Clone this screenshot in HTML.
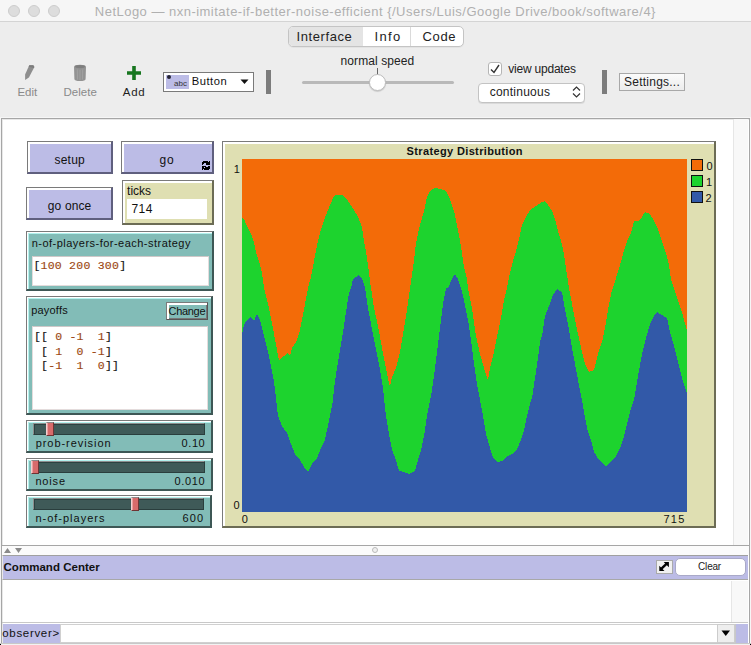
<!DOCTYPE html>
<html><head><meta charset="utf-8">
<style>
*{box-sizing:border-box;margin:0;padding:0}
html,body{width:751px;height:645px;overflow:hidden;background:#ededed;font-family:"Liberation Sans",sans-serif;position:relative}
.a{position:absolute}
.t{position:absolute;white-space:pre;line-height:1}
.btn{position:absolute;background:#bcbce6;border-top:1px solid #7a7a7a;border-left:1px solid #7a7a7a;border-right:2px solid #5f5f7e;border-bottom:2px solid #5f5f7e;box-shadow:inset 2px 2px 0 #fff}
.mon{position:absolute;background:#dfdfb2;border-top:1px solid #7a7a7a;border-left:1px solid #7a7a7a;border-right:2px solid #6c6c55;border-bottom:2px solid #6c6c55;box-shadow:inset 2px 2px 0 #fff}
.teal{position:absolute;background:#82bcb7;border-top:1px solid #7a7a7a;border-left:1px solid #7a7a7a;border-right:2px solid #3d5755;border-bottom:2px solid #3d5755;box-shadow:inset 1px 1px 0 #fff, inset 2px 2px 0 #b2f2ee}
.track{position:absolute;background:#3f5a58;border-top:1px solid #8e8e8e;border-left:1px solid #8e8e8e;border-right:1px solid #2a3e3d;border-bottom:1px solid #2a3e3d;box-shadow:inset 1px 1px 0 #2c4241}
.thumb{position:absolute;width:8px;height:14px;background:#d86b6b;border-top:1px solid #8a8a8a;border-left:1px solid #f4d0d0;border-right:1px solid #6e3434;border-bottom:1px solid #6e3434;box-shadow:inset 1px 0 0 #eaa0a0}
.inbox{position:absolute;background:#fff;border:1px solid #e4dcdc;border-top-color:#cfc8c8}
.num{color:#9c4712}
</style></head><body>
<!-- title bar -->
<div class="a" style="left:0;top:0;width:751px;height:22px;background:#f6f6f6;border-bottom:1px solid #d4d4d4"></div>
<div class="a" style="left:8px;top:5px;width:12px;height:12px;border-radius:50%;background:#dddddd;border:1px solid #cdcdcd"></div>
<div class="a" style="left:28px;top:5px;width:12px;height:12px;border-radius:50%;background:#dddddd;border:1px solid #cdcdcd"></div>
<div class="a" style="left:48px;top:5px;width:12px;height:12px;border-radius:50%;background:#dddddd;border:1px solid #cdcdcd"></div>

<!-- tabs -->
<div class="a" style="left:288px;top:26px;width:176px;height:21px;border:1px solid #c4c4c4;border-radius:5px;background:#fff;overflow:hidden;box-shadow:0 1px 0 rgba(0,0,0,0.04)">
  <div class="a" style="left:0;top:0;width:74px;height:19px;background:#e4e4e4"></div>
  <div class="a" style="left:121px;top:0;width:1px;height:19px;background:#dadada"></div>
</div>

<!-- toolbar icons -->
<svg class="a" style="left:20px;top:62px" width="20" height="22" viewBox="0 0 20 22">
  <path d="M9.3 3.2 L13.3 3.2 L14.4 4.9 L8.9 15.4 L5.1 18 L5.1 12.6 Z" fill="#8e8e8e"/><path d="M9.3 3.2 L13.3 3.2 L14.4 4.9 L13.8 6 L8.6 4.7 Z" fill="#7d7d7d"/>
</svg>
<svg class="a" style="left:70px;top:62px" width="20" height="22" viewBox="0 0 20 22">
  <path d="M4 5 Q4 2.8 10 2.8 Q16 2.8 16 5 L15.6 17 Q15.4 19 10 19 Q4.6 19 4.4 17 Z" fill="#939393"/>
  <ellipse cx="10" cy="4.6" rx="5" ry="1.6" fill="#7e7e7e"/>
  <path d="M7.3 7.5 L7.5 17.5 M10 7.8 L10 18 M12.7 7.5 L12.5 17.5" stroke="#a4a4a4" stroke-width="0.9"/>
</svg>
<svg class="a" style="left:125px;top:64px" width="18" height="18" viewBox="0 0 18 18">
  <path d="M7.2 2 H10.8 V7.2 H16 V10.8 H10.8 V16 H7.2 V10.8 H2 V7.2 H7.2 Z" fill="#17761f"/>
</svg>

<!-- widget dropdown -->
<div class="a" style="left:163px;top:72px;width:91px;height:20px;background:#fff;border:1px solid #7a7a7a"></div>
<div class="a" style="left:166px;top:75px;width:23px;height:14px;background:#bcbce6"></div>
<div class="t" style="left:174px;top:80px;font-size:8px;color:#333">abc</div>
<div class="a" style="left:167px;top:75px;width:4px;height:4px;border-radius:50%;background:#223"></div>
<svg class="a" style="left:240px;top:79px" width="10" height="6"><path d="M0.5 0.5 H8.5 L4.5 5 Z" fill="#111"/></svg>
<div class="a" style="left:266px;top:70px;width:5px;height:24px;background:#7c7c7c"></div>

<!-- speed slider -->
<div class="a" style="left:377px;top:68px;width:1px;height:7px;background:#666"></div>
<div class="a" style="left:302px;top:81px;width:152px;height:3px;border-radius:2px;background:#b9b9b9"></div>
<div class="a" style="left:369px;top:74px;width:17px;height:17px;border-radius:50%;background:#fff;border:1px solid #bdbdbd;box-shadow:0 1px 1px rgba(0,0,0,0.15)"></div>

<!-- view updates -->
<div class="a" style="left:488px;top:62px;width:14px;height:14px;border-radius:3px;background:#fff;border:1px solid #b5b5b5"></div>
<svg class="a" style="left:488px;top:62px" width="14" height="14"><path d="M3 7.5 L6 10.5 L11 3" stroke="#333" stroke-width="1.4" fill="none"/></svg>
<div class="a" style="left:478px;top:83px;width:107px;height:20px;border-radius:4px;background:#fff;border:1px solid #c3c3c3;box-shadow:0 1px 0 rgba(0,0,0,0.08)"></div>
<svg class="a" style="left:572px;top:86px" width="9" height="12"><path d="M1 4.5 L4.5 1 L8 4.5 M1 7.5 L4.5 11 L8 7.5" stroke="#333" stroke-width="1.2" fill="none"/></svg>
<div class="a" style="left:602px;top:70px;width:5px;height:24px;background:#7c7c7c"></div>
<div class="a" style="left:619px;top:73px;width:66px;height:18px;background:linear-gradient(#fbfbfb,#ececec);border:1px solid #a8a8a8"></div>

<!-- interface panel -->
<div class="a" style="left:0;top:117px;width:751px;height:528px;background:#f6f6f6"></div>
<div class="a" style="left:1px;top:118px;width:749px;height:428px;background:#fff;border:1px solid #a6a6a6;box-shadow:inset 1px 1px 0 #e8e8e8"></div>
<div class="a" style="left:733px;top:119px;width:15px;height:426px;background:#f8f8f8;border-left:1px solid #e6e6e6"></div>

<!-- buttons -->
<div class="btn" style="left:27px;top:141px;width:86px;height:33px"></div>
<div class="btn" style="left:121px;top:141px;width:93px;height:33px"></div>
<svg class="a" style="left:202px;top:161px" width="8" height="9" viewBox="0 0 8 9" shape-rendering="crispEdges" fill="#000"><rect x="1" y="0" width="5" height="1"/><rect x="7" y="0" width="1" height="1"/><rect x="0" y="1" width="8" height="1"/><rect x="0" y="2" width="2" height="1"/><rect x="4" y="2" width="4" height="1"/><rect x="0" y="3" width="1" height="1"/><rect x="4" y="3" width="4" height="1"/><rect x="0" y="5" width="4" height="1"/><rect x="6" y="5" width="2" height="1"/><rect x="0" y="6" width="2" height="1"/><rect x="3" y="6" width="5" height="1"/><rect x="0" y="7" width="8" height="1"/><rect x="0" y="8" width="1" height="1"/><rect x="2" y="8" width="5" height="1"/></svg>
<div class="btn" style="left:26px;top:187px;width:87px;height:33px"></div>

<!-- ticks monitor -->
<div class="mon" style="left:122px;top:180px;width:92px;height:45px"></div>
<div class="a" style="left:127px;top:199px;width:80px;height:20px;background:#fff"></div>

<!-- input n-of-players -->
<div class="teal" style="left:26px;top:231px;width:188px;height:60px"></div>
<div class="inbox" style="left:32px;top:256px;width:177px;height:30px"></div>

<!-- payoffs -->
<div class="teal" style="left:26px;top:296px;width:187px;height:119px"></div>
<div class="a" style="left:166px;top:302px;width:42px;height:18px;background:#82bcb7;border-top:1px solid #7a7a7a;border-left:1px solid #7a7a7a;border-right:1px solid #555;border-bottom:1px solid #555;box-shadow:inset 2px 2px 0 #fff, inset -1px -1px 0 #777"></div>
<div class="inbox" style="left:32px;top:326px;width:176px;height:84px"></div>

<!-- sliders -->
<div class="teal" style="left:26px;top:420px;width:187px;height:33px"></div>
<div class="track" style="left:33px;top:423px;width:172px;height:12px"></div>
<div class="thumb" style="left:46px;top:422px"></div>

<div class="teal" style="left:26px;top:458px;width:187px;height:33px"></div>
<div class="track" style="left:33px;top:461px;width:172px;height:12px"></div>
<div class="thumb" style="left:31px;top:460px"></div>

<div class="teal" style="left:26px;top:495px;width:186px;height:33px"></div>
<div class="track" style="left:33px;top:498px;width:171px;height:12px"></div>
<div class="thumb" style="left:131px;top:497px"></div>

<!-- plot -->
<div class="mon" style="left:222px;top:141px;width:494px;height:387px"></div>
<svg class="a" style="left:242px;top:159px" width="445" height="353" viewBox="0 0 445 353" shape-rendering="crispEdges">
  <rect x="0" y="0" width="445" height="353" fill="#f36b08"/>
  <polygon points="0,353 0,59 2,60 4,65 7,71 10,77 12,84 14,93 16,99 18,106 20,114 22,129 26,145 29,159 32,175 35,191 37,201 42,197 46,194 48,197 50,189 54,183 57,175 60,161 63,145 66,129 69,118 72,102 75,86 78,74 81,64 84,56 88,46 92,37 94,36 100,36 104,39 108,45 112,51 116,58 120,68 122,82 124,92 126,106 128,122 129,129 132,149 136,167 140,189 144,209 147,225 148,227 150,218 154,209 158,193 161,175 164,157 167,137 168,129 170,116 172,102 174,84 177,70 180,59 182,52 185,38 188,32 193,29 198,30 204,32 208,40 212,52 215,66 218,82 220,94 222,108 225,120 226,129 230,149 234,177 238,195 242,209 246,221 248,209 252,193 256,173 259,159 262,141 265,129 268,114 271,102 274,92 277,80 280,66 284,58 288,51 294,47 300,43 303,42 306,46 310,52 313,60 316,72 319,82 321,90 323,102 325,116 327,129 330,145 333,161 336,175 340,193 343,205 347,213 352,211 356,195 360,183 363,169 366,151 369,135 371,129 374,119 377,110 380,99 383,88 386,80 389,74 392,62 396,62 400,58 403,53 408,55 412,62 416,70 420,82 424,94 427,106 429,120 432,129 436,141 440,153 445,172 445,353" fill="#1dd32e"/>
  <polygon points="0,353 0,176 2,166 5,161 9,158 12,162 15,155 18,161 20,169 23,181 26,193 29,207 32,223 34,239 36,257 40,267 45,274 49,285 53,295 58,301 62,308 66,313 70,305 75,299 79,289 83,281 85,271 88,257 91,241 92,229 95,209 98,191 101,173 104,153 107,134 109,129 111,120 114,118 116,116 120,119 123,129 126,149 129,165 132,181 135,195 138,211 141,229 143,249 144,257 147,275 150,291 154,301 157,312 162,313 167,315 173,312 176,301 179,291 182,277 185,257 188,241 189,237 192,217 195,193 198,169 201,145 204,129 206,129 210,120 213,115 216,120 219,129 222,141 226,161 229,181 232,205 235,225 238,241 241,257 244,275 248,289 251,299 255,303 260,302 264,298 270,295 275,290 279,281 282,271 285,257 289,241 290,239 293,219 296,199 298,183 300,177 303,157 307,147 311,136 315,130 320,133 322,145 324,155 327,171 330,189 333,205 336,221 339,237 340,241 342,253 345,269 349,281 352,293 357,301 364,307 369,303 374,297 379,287 382,277 386,261 389,249 392,241 396,217 400,195 404,179 408,165 412,157 415,153 420,156 425,159 428,173 432,187 436,203 440,219 445,235 445,353" fill="#3259a8"/>
</svg>
<div class="a" style="left:691px;top:159px;width:12px;height:12px;background:#f36b08;border:1px solid #111"></div>
<div class="a" style="left:691px;top:175px;width:12px;height:12px;background:#1dd32e;border:1px solid #111"></div>
<div class="a" style="left:691px;top:191px;width:12px;height:12px;background:#3259a8;border:1px solid #111"></div>

<!-- splitter -->
<div class="a" style="left:749px;top:118px;width:1px;height:526px;background:#a6a6a6"></div>
<div class="a" style="left:1px;top:546px;width:1px;height:9px;background:#a6a6a6"></div>
<div class="a" style="left:2px;top:546px;width:747px;height:9px;background:#fbfbfb"></div>
<svg class="a" style="left:4px;top:548px" width="20" height="6"><path d="M0 5 L3.5 0 L7 5 Z M11 0 L18 0 L14.5 5 Z" fill="#8a8a8a"/></svg>
<div class="a" style="left:372px;top:547px;width:6px;height:6px;border-radius:50%;border:1px solid #bbb;background:#f0f0f0"></div>

<!-- command center -->
<div class="a" style="left:1px;top:555px;width:749px;height:90px;background:#fff;border-left:1px solid #a6a6a6;border-right:1px solid #a6a6a6;box-shadow:inset 1px 0 0 #e8e8e8"></div>
<div class="a" style="left:2px;top:555px;width:746px;height:25px;background:#bcbce6;border-top:1px solid #a0a0a0;border-bottom:1px solid #a8a8a8;border-left:1px solid #e8e8e8"></div>
<div class="a" style="left:656px;top:560px;width:17px;height:14px;background:#f0f0f0;border:1px solid #aaa"></div>
<svg class="a" style="left:658px;top:561px" width="13" height="12" viewBox="0 0 13 12"><path d="M10.9 1 L10.9 6.2 L5.7 1 Z M1.3 10 L1.3 4.8 L6.5 10 Z" fill="#000"/><path d="M3.2 7.9 L9 2.3" stroke="#000" stroke-width="2.4"/></svg>
<div class="a" style="left:675px;top:558px;width:71px;height:18px;border-radius:5px;background:#fff;border:1px solid #a9a9c8"></div>
<div class="a" style="left:731px;top:581px;width:17px;height:41px;background:#f8f8f8;border-left:1px solid #e6e6e6"></div>
<div class="a" style="left:2px;top:622px;width:746px;height:1px;background:#c8c8c8"></div>
<div class="a" style="left:3px;top:624px;width:57px;height:19px;background:#bcbce6"></div>
<div class="a" style="left:60px;top:624px;width:658px;height:19px;background:#fff;border:1px solid #d0d0d0"></div>
<div class="a" style="left:717px;top:624px;width:18px;height:19px;background:#eee;border:1px solid #ccc"></div>
<svg class="a" style="left:721px;top:630px" width="10" height="7"><path d="M0.5 0.5 H9 L4.75 6 Z" fill="#000"/></svg>
<div class="a" style="left:735px;top:624px;width:13px;height:19px;background:#bcbce6;border-left:1px solid #c8c8c8"></div>
<div class="a" style="left:0;top:643px;width:751px;height:1px;background:#c8c8c8"></div>
<div class="a" style="left:0;top:644px;width:751px;height:1px;background:#f2f2f2"></div>
<div class="a" style="left:0;top:644px;width:1px;height:1px;background:#000"></div>
<div class="a" style="left:750px;top:644px;width:1px;height:1px;background:#000"></div>
<div class="t" style="left:94.80px;top:5.10px;font-size:13px;letter-spacing:0.481px;font-family:'Liberation Sans',sans-serif;color:#b0b0b0;">NetLogo — nxn-imitate-if-better-noise-efficient {/Users/Luis/Google Drive/book/software/4}</div>
<div class="t" style="left:296.60px;top:29.50px;font-size:13px;letter-spacing:0.582px;font-family:'Liberation Sans',sans-serif;color:#222;">Interface</div>
<div class="t" style="left:374.60px;top:29.50px;font-size:13px;letter-spacing:1.333px;font-family:'Liberation Sans',sans-serif;color:#222;">Info</div>
<div class="t" style="left:422.50px;top:29.50px;font-size:13px;letter-spacing:0.667px;font-family:'Liberation Sans',sans-serif;color:#222;">Code</div>
<div class="t" style="left:17.40px;top:87.00px;font-size:11.5px;letter-spacing:0.035px;font-family:'Liberation Sans',sans-serif;color:#8a8a8a;">Edit</div>
<div class="t" style="left:63.40px;top:87.00px;font-size:11.5px;letter-spacing:0.060px;font-family:'Liberation Sans',sans-serif;color:#8a8a8a;">Delete</div>
<div class="t" style="left:122.80px;top:87.00px;font-size:11.5px;letter-spacing:0.700px;font-family:'Liberation Sans',sans-serif;color:#1e1e1e;">Add</div>
<div class="t" style="left:191.70px;top:76.00px;font-size:11.2px;letter-spacing:0.520px;font-family:'Liberation Sans',sans-serif;color:#111;">Button</div>
<div class="t" style="left:340.60px;top:54.90px;font-size:12px;letter-spacing:0.083px;font-family:'Liberation Sans',sans-serif;color:#222;">normal speed</div>
<div class="t" style="left:508.20px;top:63.21px;font-size:12px;letter-spacing:-0.207px;font-family:'Liberation Sans',sans-serif;color:#222;">view updates</div>
<div class="t" style="left:489.70px;top:85.90px;font-size:12px;letter-spacing:0.241px;font-family:'Liberation Sans',sans-serif;color:#222;">continuous</div>
<div class="t" style="left:624.00px;top:76.00px;font-size:12px;letter-spacing:0.240px;font-family:'Liberation Sans',sans-serif;color:#222;">Settings...</div>
<div class="t" style="left:54.60px;top:154.00px;font-size:12px;letter-spacing:0.175px;font-family:'Liberation Sans',sans-serif;color:#111;">setup</div>
<div class="t" style="left:159.40px;top:154.00px;font-size:12px;letter-spacing:1.000px;font-family:'Liberation Sans',sans-serif;color:#111;">go</div>
<div class="t" style="left:47.80px;top:200.30px;font-size:12px;letter-spacing:0.133px;font-family:'Liberation Sans',sans-serif;color:#111;">go once</div>
<div class="t" style="left:127.10px;top:185.00px;font-size:12px;letter-spacing:-0.025px;font-family:'Liberation Sans',sans-serif;color:#111;">ticks</div>
<div class="t" style="left:131.40px;top:202.80px;font-size:12px;letter-spacing:0.500px;font-family:'Liberation Sans',sans-serif;color:#111;">714</div>
<div class="t" style="left:31.70px;top:237.60px;font-size:11px;letter-spacing:0.479px;font-family:'Liberation Sans',sans-serif;color:#111;">n-of-players-for-each-strategy</div>
<div class="t" style="left:33.40px;top:260.00px;font-size:11.5px;letter-spacing:0.243px;font-family:'Liberation Mono',monospace;color:#111;-webkit-text-stroke:0.15px currentColor;">[<span class="num">100 200 300</span>]</div>
<div class="t" style="left:31.20px;top:305.00px;font-size:11px;letter-spacing:0.198px;font-family:'Liberation Sans',sans-serif;color:#111;">payoffs</div>
<div class="t" style="left:168.50px;top:305.71px;font-size:11px;letter-spacing:-0.300px;font-family:'Liberation Sans',sans-serif;color:#111;">Change</div>
<div class="t" style="left:34.00px;top:331.00px;font-size:11.5px;letter-spacing:0.180px;font-family:'Liberation Mono',monospace;color:#111;-webkit-text-stroke:0.15px currentColor;">[[ <span class="num">0</span> <span class="num">-1</span>  <span class="num">1</span>]</div>
<div class="t" style="left:34.00px;top:345.71px;font-size:11.5px;letter-spacing:0.180px;font-family:'Liberation Mono',monospace;color:#111;-webkit-text-stroke:0.15px currentColor;"> [ <span class="num">1</span>  <span class="num">0</span> <span class="num">-1</span>]</div>
<div class="t" style="left:34.00px;top:360.41px;font-size:11.5px;letter-spacing:0.180px;font-family:'Liberation Mono',monospace;color:#111;-webkit-text-stroke:0.15px currentColor;"> [<span class="num">-1</span>  <span class="num">1</span>  <span class="num">0</span>]]</div>
<div class="t" style="left:35.70px;top:438.21px;font-size:11px;letter-spacing:0.943px;font-family:'Liberation Sans',sans-serif;color:#111;">prob-revision</div>
<div class="t" style="left:181.50px;top:437.80px;font-size:11px;letter-spacing:0.602px;font-family:'Liberation Sans',sans-serif;color:#111;">0.10</div>
<div class="t" style="left:35.40px;top:475.80px;font-size:11px;letter-spacing:0.850px;font-family:'Liberation Sans',sans-serif;color:#111;">noise</div>
<div class="t" style="left:174.60px;top:475.80px;font-size:11px;letter-spacing:0.650px;font-family:'Liberation Sans',sans-serif;color:#111;">0.010</div>
<div class="t" style="left:35.40px;top:513.00px;font-size:11px;letter-spacing:0.999px;font-family:'Liberation Sans',sans-serif;color:#111;">n-of-players</div>
<div class="t" style="left:182.50px;top:513.00px;font-size:11px;letter-spacing:1.150px;font-family:'Liberation Sans',sans-serif;color:#111;">600</div>
<div class="t" style="left:406.60px;top:145.90px;font-size:11px;letter-spacing:0.360px;font-family:'Liberation Sans',sans-serif;color:#111;font-weight:bold;">Strategy Distribution</div>
<div class="t" style="left:233.80px;top:163.71px;font-size:11px;letter-spacing:0.000px;font-family:'Liberation Sans',sans-serif;color:#111;">1</div>
<div class="t" style="left:233.60px;top:499.80px;font-size:11px;letter-spacing:0.000px;font-family:'Liberation Sans',sans-serif;color:#111;">0</div>
<div class="t" style="left:241.80px;top:513.80px;font-size:11px;letter-spacing:0.000px;font-family:'Liberation Sans',sans-serif;color:#111;">0</div>
<div class="t" style="left:663.40px;top:514.00px;font-size:11px;letter-spacing:1.300px;font-family:'Liberation Sans',sans-serif;color:#111;">715</div>
<div class="t" style="left:706.60px;top:161.00px;font-size:11px;letter-spacing:0.000px;font-family:'Liberation Sans',sans-serif;color:#111;">0</div>
<div class="t" style="left:706.00px;top:176.80px;font-size:11px;letter-spacing:0.000px;font-family:'Liberation Sans',sans-serif;color:#111;">1</div>
<div class="t" style="left:705.60px;top:193.00px;font-size:11px;letter-spacing:0.000px;font-family:'Liberation Sans',sans-serif;color:#111;">2</div>
<div class="t" style="left:3.50px;top:562.00px;font-size:11.5px;letter-spacing:0.033px;font-family:'Liberation Sans',sans-serif;color:#111;font-weight:bold;">Command Center</div>
<div class="t" style="left:698.10px;top:562.10px;font-size:10px;letter-spacing:-0.200px;font-family:'Liberation Sans',sans-serif;color:#222;">Clear</div>
<div class="t" style="left:2.30px;top:627.90px;font-size:11.5px;letter-spacing:0.668px;font-family:'Liberation Sans',sans-serif;color:#111;">observer&gt;</div>
</body></html>
